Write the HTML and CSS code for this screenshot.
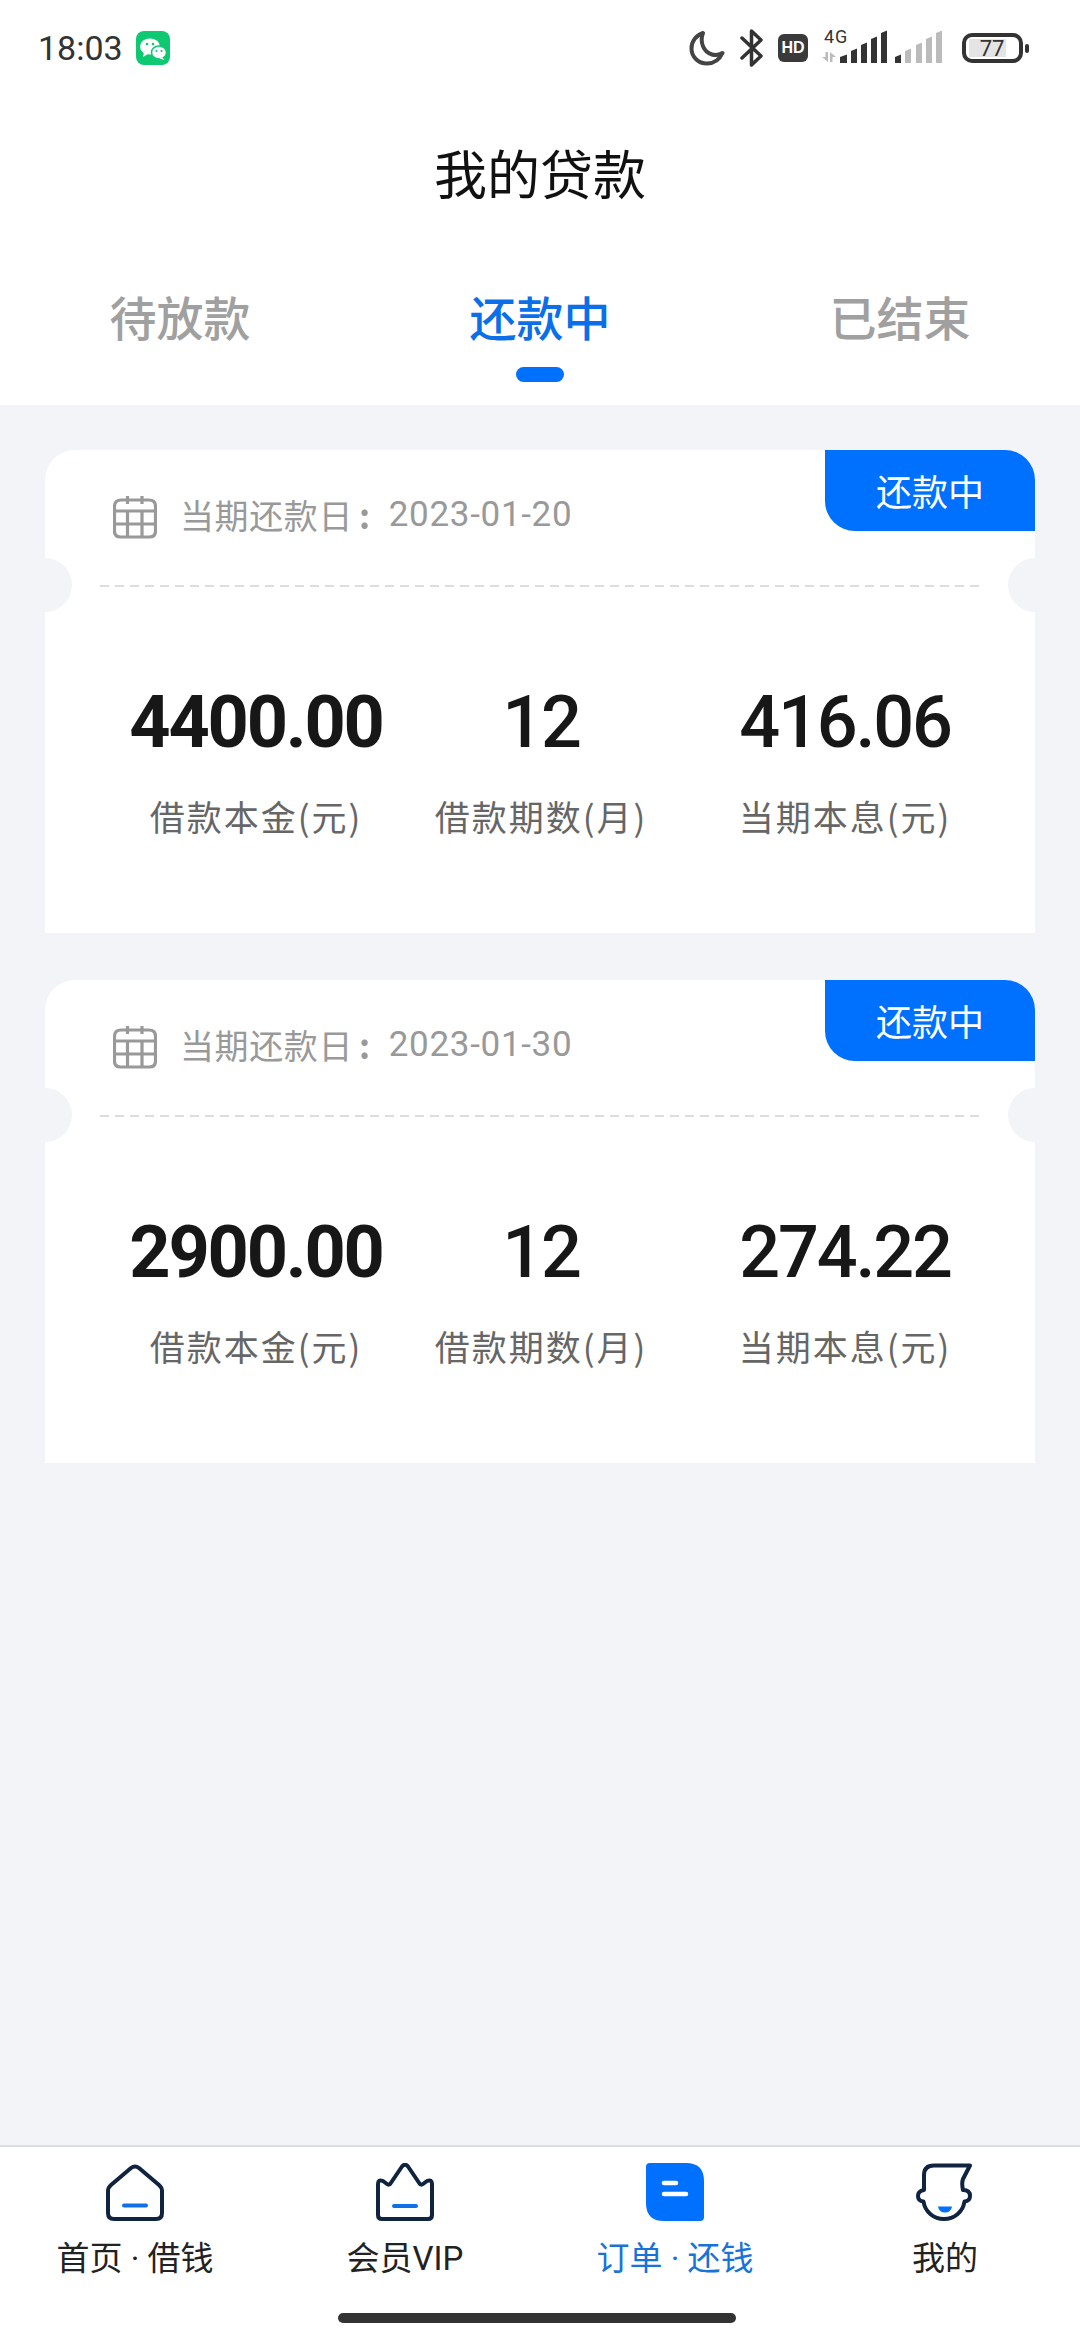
FILE: index.html
```html
<!DOCTYPE html>
<html lang="zh-CN">
<head>
  <meta charset="UTF-8" />
  <meta name="viewport" content="width=device-width, initial-scale=1.0"/>
  <title>我的贷款</title>
  <link rel="stylesheet" href="styles.css">
</head>
<body>

  <header class="top">
    <!-- Status bar -->
    <div class="status">
      <div class="status-left">
        <span class="time">18:03</span>
        <svg class="wechat" width="34" height="34" viewBox="0 0 34 34">
          <rect width="34" height="34" rx="8" fill="#0fc972"/>
          <ellipse cx="14" cy="15.500" rx="10" ry="8" fill="#fff"/>
          <path d="M8 21l-1 5 5-3z" fill="#fff"/>
          <ellipse cx="23" cy="21.500" rx="7.500" ry="6.500" fill="#fff" stroke="#0fc972" stroke-width="1.500"/>
          <path d="M26 26l2.500 3-5-1.500z" fill="#fff"/>
          <circle cx="11" cy="13" r="1.300" fill="#0fc972"/>
          <circle cx="17" cy="13" r="1.300" fill="#0fc972"/>
          <circle cx="20.500" cy="20" r="1.100" fill="#0fc972"/>
          <circle cx="25.500" cy="20" r="1.100" fill="#0fc972"/>
        </svg>
      </div>
      <div class="status-right">
        <svg class="moon" width="36" height="36" viewBox="0 0 36 36">
          <path d="M14 3C7 5.500 2.500 11.500 2.500 18.500 2.500 27 9.500 33.500 18 33.500 25 33.500 30.500 29.500 33.500 23 30 25 26.500 25.500 23 24.500 14.500 22 10.500 12 14 3Z" fill="none" stroke="#444" stroke-width="4" stroke-linejoin="round"/>
        </svg>
        <svg class="bt" width="24" height="40" viewBox="0 0 24 40">
          <path d="M2 10L21 28 11.500 37V3L21 12 2 30" fill="none" stroke="#333" stroke-width="3.500" stroke-linejoin="round" stroke-linecap="round"/>
        </svg>
        <span class="hd">HD</span>
        <svg class="net" width="67" height="48" viewBox="0 -5 67 48">
          <text x="4" y="14" class="net-text">4G</text>
          <path d="M5.500 23H8V33L2 28H5.500ZM10 33V23L16 28H12.500V33Z" fill="#bbb"/>
          <path d="M20 28l7-2.500V34h-7zM31 22l6-2.500V34h-6zM41 16l6-2.500V34h-6zM51 10l6-2.500V34h-6zM61 4l6-2.500V34h-6z" fill="#333"/>
        </svg>
        <svg class="sig" width="48" height="34" viewBox="0 2 48 34">
          <path d="M0 28l6-2.500V34H0z" fill="#333"/>
          <path d="M10 22l6-2.500V34h-6zM21 16l6-2.500V34h-6zM31 10l6-2.500V34h-6zM41 4l6-2.500V34h-6z" fill="#bbb"/>
        </svg>
        <svg class="batt" width="67" height="30" viewBox="0 0 67 30">
          <rect x="2" y="2" width="57" height="26" rx="8" fill="none" stroke="#333" stroke-width="4"/>
          <rect x="7" y="6" width="37" height="18" fill="#e4e4e4"/>
          <text x="30" y="23" class="batt-text" text-anchor="middle">77</text>
          <rect x="63" y="11" width="4" height="9" rx="2" fill="#333"/>
        </svg>
      </div>
    </div>

    <h1 class="title">我的贷款</h1>

    <!-- Tabs -->
    <nav class="tabs">
      <div class="tab">待放款</div>
      <div class="tab active">还款中</div>
      <div class="tab">已结束</div>
    </nav>
  </header>

  <main class="list">
    <section class="card">
      <div class="badge">还款中</div>
      <div class="card-head">
        <svg class="cal" width="44" height="44" viewBox="0 0 44 44">
          <path d="M8 5H36Q42.500 5 42.500 11.500V36Q42.500 42 36.500 42H7.500Q1.500 42 1.500 36V11.500Q1.500 5 8 5ZM1.500 16H42.500M1.500 29H42.500M14.500 1V9M29 1V9M14.500 16V42M29 16V42" fill="none" stroke="#999" stroke-width="3.200"/>
        </svg>
        <span class="due-label">当期还款日<span class="due-colon">:</span></span>
        <span class="due-date">2023-01-20</span>
      </div>
      <div class="divider"></div>
      <div class="stats">
        <div class="stat">
          <div class="num big">4400.00</div>
          <div class="lbl">借款本金(元)</div>
        </div>
        <div class="stat">
          <div class="num">12</div>
          <div class="lbl">借款期数(月)</div>
        </div>
        <div class="stat">
          <div class="num">416.06</div>
          <div class="lbl">当期本息(元)</div>
        </div>
      </div>
    </section>

    <section class="card">
      <div class="badge">还款中</div>
      <div class="card-head">
        <svg class="cal" width="44" height="44" viewBox="0 0 44 44">
          <path d="M8 5H36Q42.500 5 42.500 11.500V36Q42.500 42 36.500 42H7.500Q1.500 42 1.500 36V11.500Q1.500 5 8 5ZM1.500 16H42.500M1.500 29H42.500M14.500 1V9M29 1V9M14.500 16V42M29 16V42" fill="none" stroke="#999" stroke-width="3.200"/>
        </svg>
        <span class="due-label">当期还款日<span class="due-colon">:</span></span>
        <span class="due-date">2023-01-30</span>
      </div>
      <div class="divider"></div>
      <div class="stats">
        <div class="stat">
          <div class="num big">2900.00</div>
          <div class="lbl">借款本金(元)</div>
        </div>
        <div class="stat">
          <div class="num">12</div>
          <div class="lbl">借款期数(月)</div>
        </div>
        <div class="stat">
          <div class="num">274.22</div>
          <div class="lbl">当期本息(元)</div>
        </div>
      </div>
    </section>
  </main>

  <!-- Bottom nav -->
  <footer class="bottom">
    <div class="nav-item">
      <svg width="58" height="58" viewBox="0 0 58 58">
        <path d="M5 22L25 5Q29 2 33 5L53 22Q56 24.500 56 28V50Q56 56 50 56H8Q2 56 2 50V28Q2 24.500 5 22Z" fill="none" stroke="#10233f" stroke-width="4" stroke-linejoin="round"/>
        <path d="M18 42.500H40" stroke="#0f70e6" stroke-width="4" stroke-linecap="round"/>
      </svg>
      <span>首页 · 借钱</span>
    </div>
    <div class="nav-item">
      <svg width="58" height="58" viewBox="0 0 58 58">
        <path d="M2 21Q2 16 7 18L11 21Q13 22.500 14.500 20.500L26 3.500Q29 0 32 3.500L43.500 20.500Q45 22.500 47 21L51 18Q56 16 56 21V52Q56 56 52 56H6Q2 56 2 52Z" fill="none" stroke="#10233f" stroke-width="4" stroke-linejoin="round"/>
        <path d="M18 43H40" stroke="#0f70e6" stroke-width="4" stroke-linecap="round"/>
      </svg>
      <span>会员VIP</span>
    </div>
    <div class="nav-item active">
      <svg width="58" height="58" viewBox="0 0 58 58">
        <path d="M4 0H40Q58 0 58 18V54Q58 58 54 58H18Q0 58 0 40V4Q0 0 4 0Z" fill="#0070ff"/>
        <path d="M18 20H30M18 31H40" stroke="#fff" stroke-width="4.500" stroke-linecap="round"/>
      </svg>
      <span>订单 · 还钱</span>
    </div>
    <div class="nav-item">
      <svg width="58" height="58" viewBox="0 0 58 58">
        <path d="M8 27V12Q8 2.500 18 2.500H54L47 16Q45.500 20 47 27Q54 27 54 33Q54 38 48.500 38.500C47 49 38 56 28 56C18 56 9 49 7.500 38.500Q2 38 2 33Q2 28 8 27Z" fill="none" stroke="#10233f" stroke-width="4" stroke-linejoin="round"/>
        <path d="M22 43.500H36Q35 49.500 29 49.500Q23 49.500 22 43.500Z" fill="#0070ff"/>
      </svg>
      <span>我的</span>
    </div>
    <div class="home-bar"></div>
  </footer>

</body>
</html>
```

FILE: styles.css
```css
* {
  box-sizing: border-box;
}

html, body {
  height: 100%;
}

body {
  margin: 0;
  width: 1080px;
  height: 2340px;
  display: flex;
  flex-direction: column;
  background: #f2f4f8;
  font-family: "Noto Sans CJK SC", "Noto Sans", sans-serif;
  color: #111;
}

.top {
  background: #fff;
}

/* status bar */
.status {
  height: 100px;
  padding: 0 51px 4px 38px;
  display: flex;
  justify-content: space-between;
  align-items: center;
}

.status-left {
  display: flex;
  align-items: center;
  gap: 13px;
}

.time {
  font-family: Roboto, sans-serif;
  font-size: 34px;
  color: #333;
}

.status-right {
  display: flex;
  align-items: center;
}

.moon {
  margin-right: 15px;
}

.bt {
  margin-right: 14px;
}

.hd {
  width: 30px;
  height: 28px;
  margin-right: 12px;
  background: #3a3a3a;
  border-radius: 6px;
  color: #fff;
  font-family: "Liberation Sans", sans-serif;
  font-size: 16px;
  font-weight: bold;
  line-height: 28px;
  text-align: center;
}

.net {
  margin-right: 8px;
}

.net-text {
  font-family: Roboto, sans-serif;
  font-size: 18px;
  letter-spacing: 1px;
  fill: #333;
}

.sig {
  margin-right: 19px;
}

.batt-text {
  font-family: Roboto, sans-serif;
  font-size: 22px;
  fill: #333;
}

.title {
  margin: 0;
  height: 148px;
  padding-bottom: 3px;
  line-height: 145px;
  font-size: 53px;
  font-weight: 400;
  text-align: center;
  color: #111;
}

/* tabs */
.tabs {
  height: 157px;
  display: grid;
  grid-template-columns: repeat(3, 360px);
}

.tab {
  position: relative;
  padding-top: 35px;
  font-size: 47px;
  font-weight: 500;
  line-height: 66px;
  text-align: center;
  color: #a0a0a0;
}

.tab.active {
  color: #0a6fe8;
}

.tab.active::after {
  content: "";
  position: absolute;
  left: 156px;
  top: 119px;
  width: 48px;
  height: 15px;
  border-radius: 8px;
  background: #0070ff;
}

/* cards */
.list {
  flex: 1;
  padding: 45px 45px 0;
  display: flex;
  flex-direction: column;
  gap: 47px;
}

.card {
  position: relative;
  height: 483px;
  background: #fff;
  border-radius: 30px 30px 0 0;
}

.card::before,
.card::after {
  content: "";
  position: absolute;
  top: 108px;
  width: 54px;
  height: 54px;
  border-radius: 50%;
  background: #f2f4f8;
}

.card::before {
  left: -27px;
}

.card::after {
  right: -27px;
}

.badge {
  position: absolute;
  top: 0;
  right: 0;
  width: 210px;
  height: 81px;
  border-radius: 0 30px 0 30px;
  background: #0070ff;
  color: #fff;
  font-size: 36px;
  line-height: 81px;
  text-align: center;
}

.card-head {
  height: 135px;
  padding: 0 0 6px 68px;
  display: flex;
  align-items: center;
}

.cal {
  margin: 4px 23px 0 0;
}

.due-label {
  font-size: 34px;
  letter-spacing: 0.6px;
  color: #999;
}

.due-colon {
  margin-left: 6px;
  font-weight: 700;
}

.due-date {
  margin-left: 18px;
  font-family: Roboto, sans-serif;
  font-size: 35px;
  letter-spacing: 0.7px;
  color: #999;
}

.divider {
  height: 2px;
  margin: 0 55px;
  background: repeating-linear-gradient(90deg, #ddd 0, #ddd 9px, #fff 9px, #fff 15px);
}

.stats {
  padding: 95px 0 0 66px;
  display: grid;
  grid-template-columns: 290px 280px 328px;
}

.stat {
  text-align: center;
}

.num {
  height: 82px;
  font-family: Roboto, sans-serif;
  font-size: 72px;
  font-weight: 500;
  line-height: 82px;
  letter-spacing: -2.200px;
  color: #171717;
}

.num.big {
  font-weight: 700;
}

.lbl {
  margin-top: 27px;
  font-size: 35px;
  line-height: 50px;
  letter-spacing: 2px;
  color: #666;
}

/* bottom nav */
.bottom {
  position: relative;
  height: 195px;
  padding-top: 16px;
  display: grid;
  grid-template-columns: repeat(4, 270px);
  align-items: start;
  border-top: 2px solid #dcdde0;
  background: #fff;
}

.nav-item {
  display: flex;
  flex-direction: column;
  align-items: center;
  gap: 15px;
  font-family: Roboto, "Noto Sans CJK SC", sans-serif;
  font-size: 33px;
  line-height: 46px;
  color: #222;
}

.nav-item.active {
  color: #1673d8;
}

.home-bar {
  position: absolute;
  left: 338px;
  top: 166px;
  width: 398px;
  height: 10px;
  border-radius: 5px;
  background: #333;
}
```
